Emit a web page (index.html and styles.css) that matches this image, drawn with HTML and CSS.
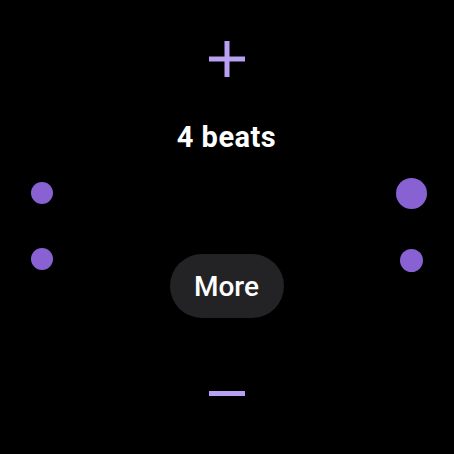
FILE: index.html
```html
<!DOCTYPE html>
<html>
<head>
<meta charset="utf-8">
<link rel="stylesheet" href="styles.css">
</head>
<body>
<div class="screen">
  <div class="side side-left">
    <span class="dot dot-sm"></span>
    <span class="dot dot-sm gap-l"></span>
  </div>
  <div class="center">
    <svg class="icon-plus" width="36" height="36" viewBox="0 0 36 36">
      <rect x="0" y="15.5" width="36" height="5" fill="#b8a0f2"/>
      <rect x="15.5" y="0" width="5" height="36" fill="#b8a0f2"/>
    </svg>
    <div class="title">4 beats</div>
    <button class="more">More</button>
    <svg class="icon-minus" width="36" height="5" viewBox="0 0 36 5">
      <rect x="0" y="0" width="36" height="5" fill="#b8a0f2"/>
    </svg>
  </div>
  <div class="side side-right">
    <span class="dot dot-lg"></span>
    <span class="dot dot-sm gap-r"></span>
  </div>
</div>
</body>
</html>
```
FILE: styles.css
```css
html, body {
  margin: 0;
  padding: 0;
  background: #000;
}
.screen {
  width: 454px;
  height: 454px;
  display: grid;
  grid-template-columns: 84px 285px 85px;
  font-family: Roboto, "Liberation Sans", sans-serif;
  color: #fff;
}
.side {
  display: flex;
  flex-direction: column;
  align-items: center;
}
.side-left { padding-top: 182px; }
.side-right { padding-top: 178px; }
.dot {
  display: block;
  border-radius: 50%;
  background: #8862d2;
}
.dot-sm { width: 22px; height: 22px; }
.dot-lg { width: 31px; height: 31px; }
.gap-l { margin-top: 44px; }
.gap-r { margin-top: 40px; width: 23px; height: 23px; }
.center {
  display: flex;
  flex-direction: column;
  align-items: center;
}
.icon-plus {
  display: block;
  margin-top: 41px;
}
.title {
  margin-top: 43px;
  font-size: 29px;
  font-weight: 700;
  line-height: 34px;
  letter-spacing: 0.5px;
}
.more {
  margin-top: 100px;
  width: 114px;
  height: 64px;
  border: none;
  border-radius: 32px;
  background: #232225;
  color: #fff;
  font-family: Roboto, "Liberation Sans", sans-serif;
  font-size: 28px;
  font-weight: 500;
  padding: 0;
}
.icon-minus {
  display: block;
  margin-top: 73px;
}
```
